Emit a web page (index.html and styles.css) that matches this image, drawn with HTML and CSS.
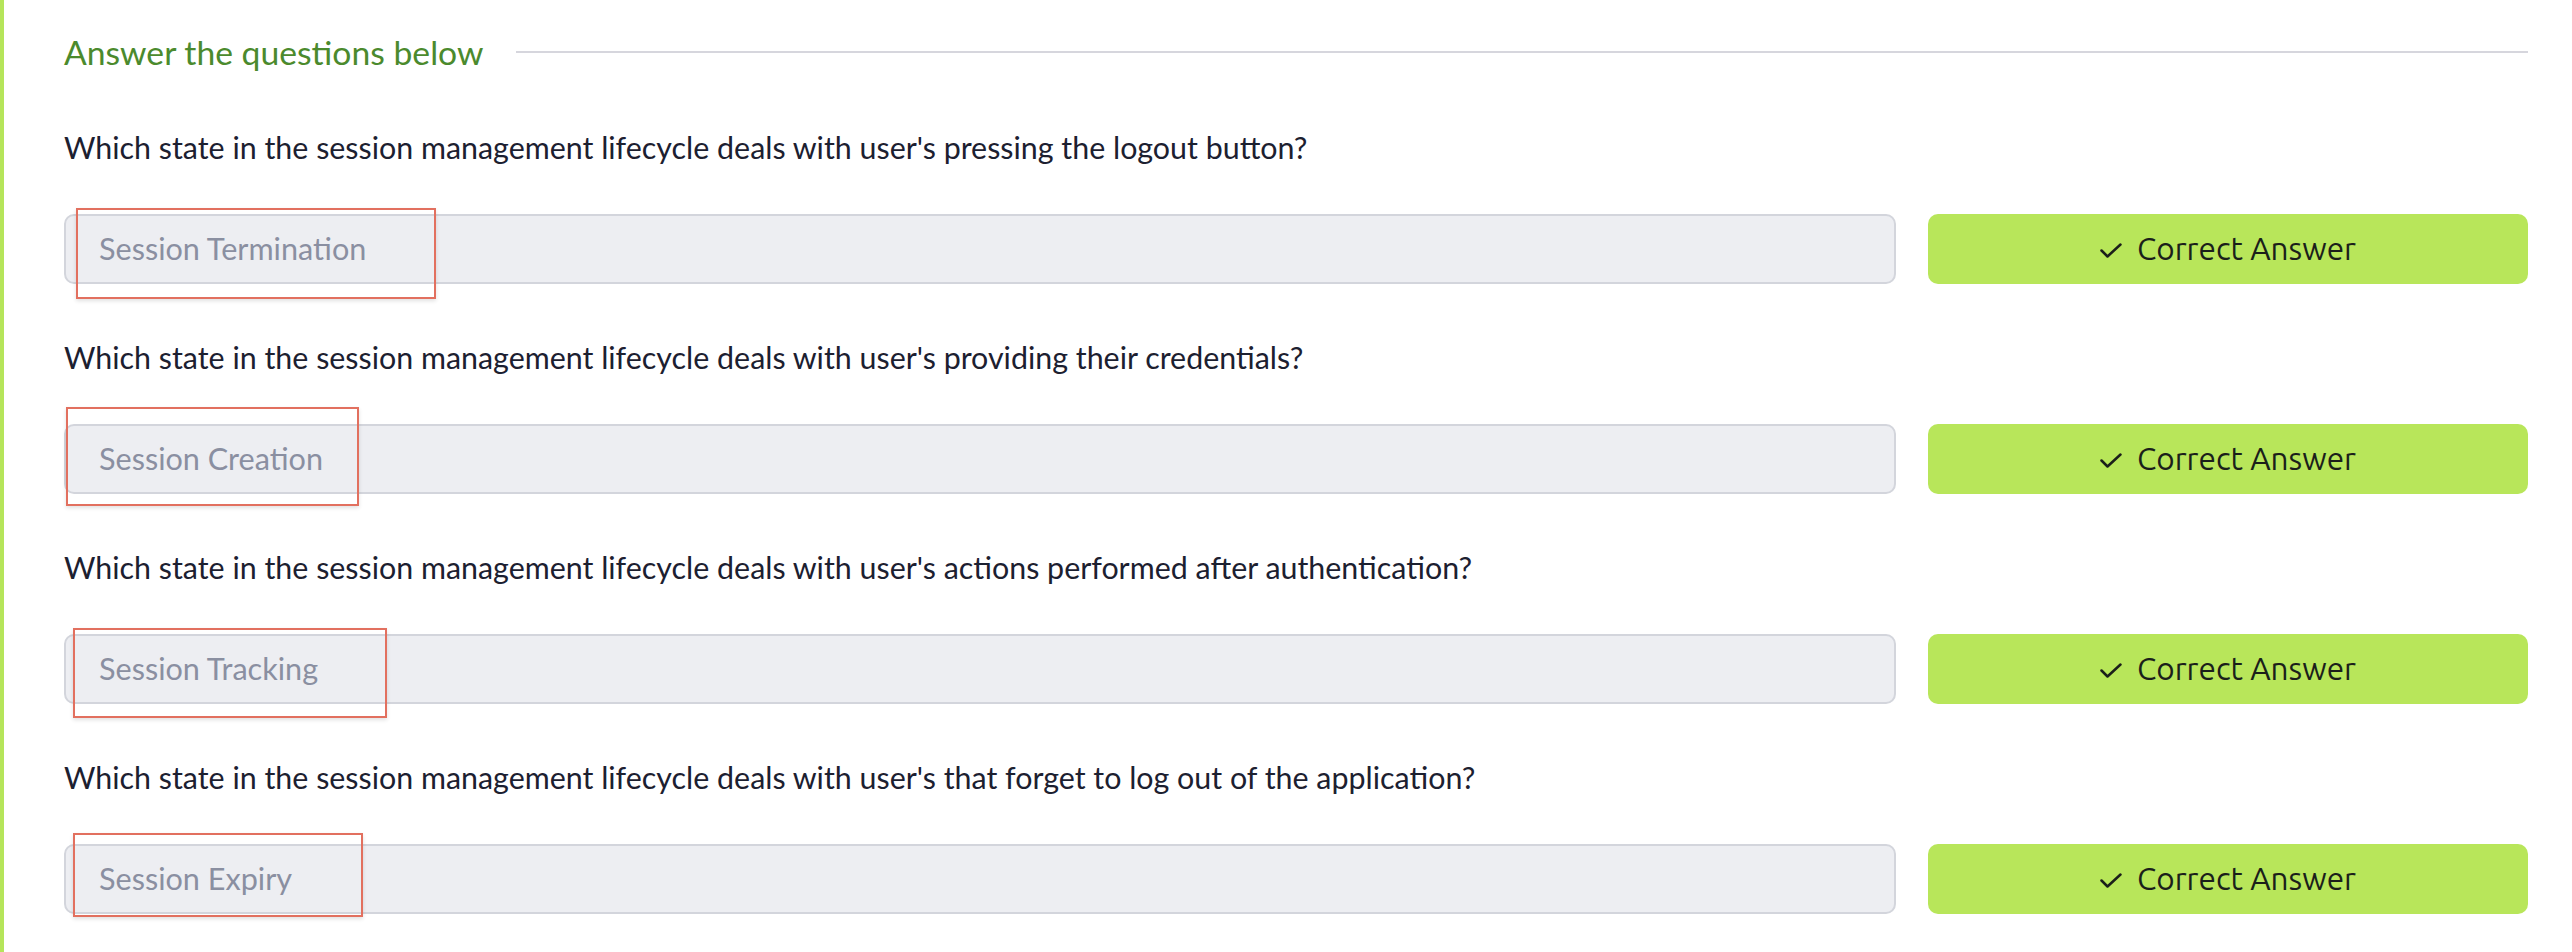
FILE: index.html
```html
<!DOCTYPE html>
<html lang="en">
<head>
<meta charset="utf-8">
<title>Answer the questions below</title>
<link rel="stylesheet" href="styles.css">
</head>
<body>
<section class="panel">
  <div class="heading-row">
    <h2 class="heading">Answer the questions below</h2>
    <div class="rule"></div>
  </div>

  <div class="qa">
    <p class="question">Which state in the session management lifecycle deals with user's pressing the logout button?</p>
    <div class="answer-row">
      <div class="field">
        <div class="answer-input">Session Termination</div>
        <div class="mark mark-1"></div>
      </div>
      <button class="correct-btn"><svg class="check" viewBox="0 0 22 15" width="22" height="15"><path d="M1.5 7.5 L7.5 13.5 L20.5 1.5" fill="none" stroke="#1b1f1a" stroke-width="2.5" stroke-linecap="round" stroke-linejoin="round"/></svg><span>Correct Answer</span></button>
    </div>
  </div>

  <div class="qa">
    <p class="question">Which state in the session management lifecycle deals with user's providing their credentials?</p>
    <div class="answer-row">
      <div class="field">
        <div class="answer-input">Session Creation</div>
        <div class="mark mark-2"></div>
      </div>
      <button class="correct-btn"><svg class="check" viewBox="0 0 22 15" width="22" height="15"><path d="M1.5 7.5 L7.5 13.5 L20.5 1.5" fill="none" stroke="#1b1f1a" stroke-width="2.5" stroke-linecap="round" stroke-linejoin="round"/></svg><span>Correct Answer</span></button>
    </div>
  </div>

  <div class="qa">
    <p class="question">Which state in the session management lifecycle deals with user's actions performed after authentication?</p>
    <div class="answer-row">
      <div class="field">
        <div class="answer-input">Session Tracking</div>
        <div class="mark mark-3"></div>
      </div>
      <button class="correct-btn"><svg class="check" viewBox="0 0 22 15" width="22" height="15"><path d="M1.5 7.5 L7.5 13.5 L20.5 1.5" fill="none" stroke="#1b1f1a" stroke-width="2.5" stroke-linecap="round" stroke-linejoin="round"/></svg><span>Correct Answer</span></button>
    </div>
  </div>

  <div class="qa">
    <p class="question">Which state in the session management lifecycle deals with user's that forget to log out of the application?</p>
    <div class="answer-row">
      <div class="field">
        <div class="answer-input">Session Expiry</div>
        <div class="mark mark-4"></div>
      </div>
      <button class="correct-btn"><svg class="check" viewBox="0 0 22 15" width="22" height="15"><path d="M1.5 7.5 L7.5 13.5 L20.5 1.5" fill="none" stroke="#1b1f1a" stroke-width="2.5" stroke-linecap="round" stroke-linejoin="round"/></svg><span>Correct Answer</span></button>
    </div>
  </div>
</section>
</body>
</html>
```
FILE: styles.css
```css
html, body {
  margin: 0;
  padding: 0;
  background: #ffffff;
}

.panel {
  box-sizing: border-box;
  min-height: 952px;
  border-left: 4px solid #b5e55a;
  padding: 32px 44px 0 60px;
  font-family: "Lato", "Open Sans", sans-serif;
}

.heading-row {
  display: flex;
  align-items: center;
  gap: 33px;
  height: 40px;
}

.heading {
  margin: 0;
  font-family: "Lato", "Open Sans", sans-serif;
  font-weight: 400;
  font-size: 33.7px;
  line-height: 40px;
  color: #4b8a2d;
  white-space: nowrap;
}

.rule {
  flex: 1;
  height: 2px;
  background: #d6d6dd;
}

.qa {
  margin-top: 55px;
}

.qa + .qa {
  margin-top: 53px;
}

.question {
  margin: 0 0 47px 0;
  font-size: 30.4px;
  line-height: 40px;
  color: #1c2030;
  white-space: nowrap;
}

.answer-row {
  display: flex;
  gap: 32px;
  height: 70px;
}

.field {
  position: relative;
  flex: 1;
}

.answer-input {
  box-sizing: border-box;
  height: 70px;
  display: flex;
  align-items: center;
  padding-left: 33px;
  background: #edeef2;
  border: 2px solid #d3d5dc;
  border-radius: 10px;
  font-size: 30.6px;
  line-height: 40px;
  color: #8a8fa1;
}

.correct-btn {
  box-sizing: border-box;
  width: 600px;
  height: 70px;
  display: flex;
  align-items: center;
  justify-content: center;
  gap: 15px;
  border: none;
  border-radius: 10px;
  background: #b8e65a;
  font-family: "Ubuntu", "Noto Sans", sans-serif;
  font-size: 31.5px;
  line-height: 40px;
  color: #1b1f1a;
  padding: 0;
}

.check {
  display: block;
  margin-top: 2px;
}

.mark {
  position: absolute;
  box-sizing: border-box;
  border: 2px solid #e2705f;
  box-shadow: 0 2px 4px rgba(0, 0, 0, 0.12);
  pointer-events: none;
}

.mark-1 { left: 12px; top: -6px; width: 360px; height: 91px; }
.mark-2 { left: 2px;  top: -17px; width: 293px; height: 99px; }
.mark-3 { left: 9px;  top: -6px; width: 314px; height: 90px; }
.mark-4 { left: 9px;  top: -11px; width: 290px; height: 84px; }
```
